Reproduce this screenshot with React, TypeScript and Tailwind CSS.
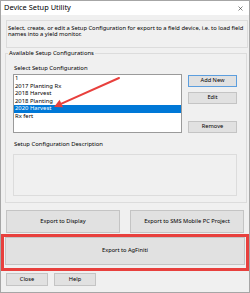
import React from "react";

const configs = ["1", "2017 Planting Rx", "2018 Harvest", "2018 Planting", "2020 Harvest", "Rx fert"];

const btn =
  "flex items-center justify-center bg-[#e1e1e1] border border-[#c4c4c4] text-[5.7px] text-black leading-none";

export default function App() {
  return (
    <div className="relative w-[250px] h-[293px] bg-[#f0f0f0] border border-[#a6a6a6] font-['Noto_Sans',sans-serif] text-black overflow-hidden">
      {/* title bar */}
      <div className="h-[14px] bg-white flex items-center justify-between pl-[3px] pr-[6px]">
        <span className="text-[7.4px] leading-none">Device Setup Utility</span>
        <svg width="5" height="5" viewBox="0 0 5 5">
          <path d="M0.5 0.5 L4.5 4.5 M4.5 0.5 L0.5 4.5" stroke="#333" strokeWidth="0.6" />
        </svg>
      </div>

      {/* intro text */}
      <div className="mt-[5px] ml-[5px] w-[242px] h-[28px] border border-[#dcdcdc] px-[1px] pt-[4px] text-[5.8px] leading-[6px]">
        Select, create, or edit a Setup Configuration for export to a field device, i.e. to load field names into a yield monitor.
      </div>

      {/* group box */}
      <fieldset className="mt-[1px] ml-[4px] w-[242px] border border-[#dcdcdc] pb-[6px]">
        <legend className="ml-[2px] px-[1px] text-[5.9px] leading-[8px]">Available Setup Configurations</legend>
        <div className="pl-[7px]">
          <div className="mt-[7px] ml-[1px] text-[5.9px] leading-[8px]">Select Setup Configuration</div>
          <div className="mt-[2px] flex">
            <div className="w-[169px] h-[59px] bg-white border border-[#9a9a9a]">
              {configs.map((c) => (
                <div
                  key={c}
                  className={`h-[7.5px] leading-[7.5px] text-[5.9px] pl-[1px] ${
                    c === "2020 Harvest" ? "bg-[#0078d7] text-white" : ""
                  }`}
                >
                  {c}
                </div>
              ))}
            </div>
            <div className="ml-[6px] mt-[1px] flex flex-col w-[49px]">
              <div className={`${btn} h-[12px] !border-[#5c9ede]`}>Add New</div>
              <div className={`${btn} h-[12px] mt-[5px]`}>Edit</div>
              <div className={`${btn} h-[12px] mt-[17px]`}>Remove</div>
            </div>
          </div>
          <div className="mt-[7px] ml-[1px] text-[5.9px] leading-[8px]">Setup Configuration Description</div>
          <div className="mt-[6px] w-[224px] h-[42px] border border-[#dcdcdc]" />
        </div>
      </fieldset>

      {/* export buttons */}
      <div className="mt-[7px] ml-[5px] flex gap-[10px]">
        <div className={`${btn} w-[114px] h-[23px]`}>Export to Display</div>
        <div className={`${btn} w-[114px] h-[23px]`}>Export to SMS Mobile PC Project</div>
      </div>

      <div className="mt-[1px] w-[248px] h-[37px] border-[3px] border-[#e8403d]">
        <div className={`${btn} ml-[1px] w-[240px] h-[28px]`}>Export to AgFiniti</div>
      </div>

      <div className="mt-[2px] ml-[5px] flex gap-[6px]">
        <div className={`${btn} w-[42px] h-[13px]`}>Close</div>
        <div className={`${btn} w-[42px] h-[13px]`}>Help</div>
      </div>

      {/* annotation arrow */}
      <svg className="absolute left-0 top-0 pointer-events-none" width="250" height="293">
        <line x1="118" y1="77" x2="60.5" y2="102.6" stroke="#e8403d" strokeWidth="2" strokeLinecap="round" />
        <polygon points="53,106 62,106.3 58.6,98.8" fill="#e8403d" />
      </svg>
    </div>
  );
}
